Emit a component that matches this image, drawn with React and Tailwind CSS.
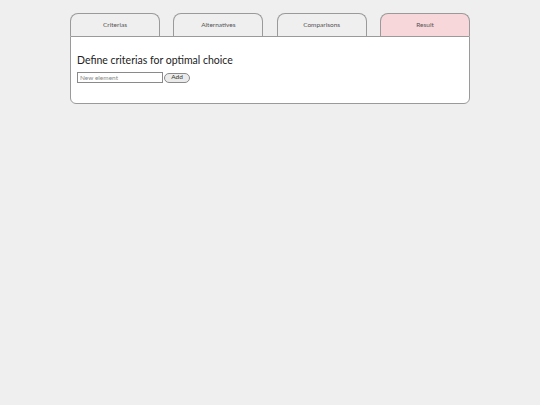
import React, { useState } from 'react';

const tabs = ['Criterias', 'Alternatives', 'Comparisons', 'Result'];

export default function App() {
  const [items, setItems] = useState([]);
  const [value, setValue] = useState('');

  const add = () => {
    if (!value.trim()) return;
    setItems([...items, value.trim()]);
    setValue('');
  };

  return (
    <div className="min-h-[405px] bg-[#efefef] pt-[13px] font-['Lato',sans-serif]">
      <div className="w-[400px] mx-auto">
        <div className="flex justify-between">
          {tabs.map((t) => (
            <div
              key={t}
              className={
                t === 'Result'
                  ? 'w-[90px] h-[23px] flex items-center justify-center border border-b-0 border-[#9a9a9a] rounded-t-[8px] bg-[#f8d7da] text-[6.5px] text-[#555]'
                  : 'w-[90px] h-[23px] flex items-center justify-center border border-b-0 border-[#9a9a9a] rounded-t-[8px] bg-[#efefef] text-[6.5px] text-[#555]'
              }
            >
              {t}
            </div>
          ))}
        </div>
        <div className="bg-white border border-[#9a9a9a] rounded-b-[6px] px-[6px] pt-[17px] pb-[20px]">
          <h1 className="text-[10.5px] leading-[13px] text-[#222]">
            Define criterias for optimal choice
          </h1>
          {items.length > 0 && (
            <ul className="mt-1 text-[7px] text-[#333]">
              {items.map((it, i) => (
                <li key={i}>{it}</li>
              ))}
            </ul>
          )}
          <div className="flex items-center mt-[5px]">
            <input
              value={value}
              onChange={(e) => setValue(e.target.value)}
              placeholder="New element"
              className="w-[86px] h-[11px] border border-[#8a8a8a] px-[2px] text-[6.5px] text-[#333] placeholder:text-[#8a8a8a] outline-none"
            />
            <button
              type="button"
              onClick={add}
              className="ml-[1px] w-[26px] h-[10px] rounded-full border border-[#8a8a8a] bg-[#ebebeb] text-[6.5px] leading-none text-[#333]"
            >
              Add
            </button>
          </div>
        </div>
      </div>
    </div>
  );
}
